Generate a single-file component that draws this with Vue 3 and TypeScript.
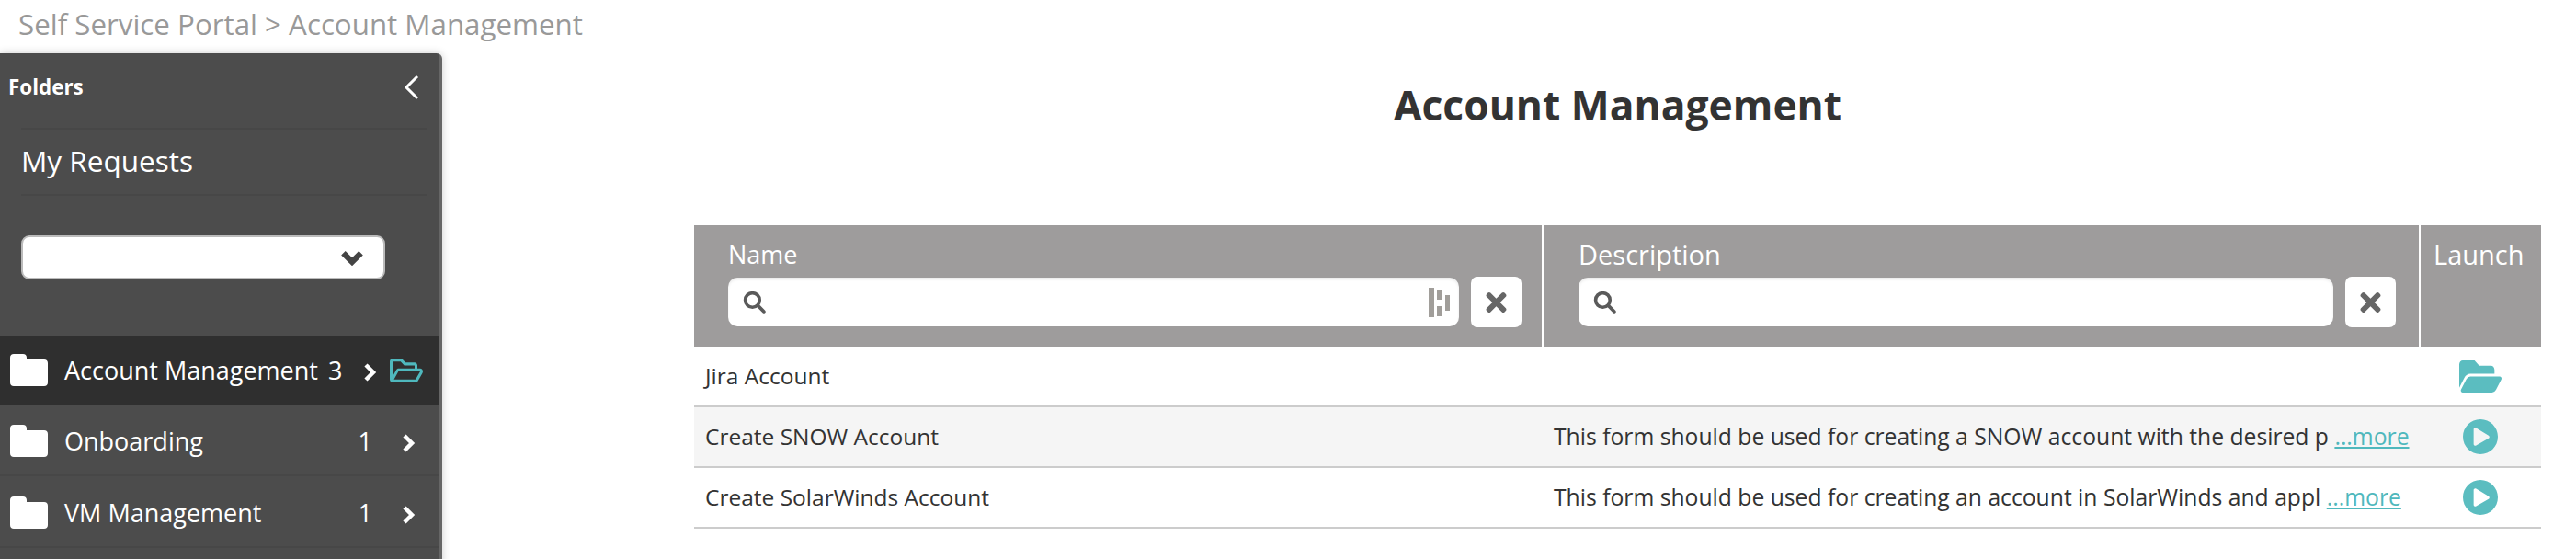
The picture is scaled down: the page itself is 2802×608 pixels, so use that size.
<script setup lang="ts">
interface Folder { name: string; count: number; active?: boolean }
interface Row { name: string; desc: string; kind: 'folder' | 'play' }
const folders: Folder[] = [
  { name: 'Account Management', count: 3, active: true },
  { name: 'Onboarding', count: 1 },
  { name: 'VM Management', count: 1 },
]
const rows: Row[] = [
  { name: 'Jira Account', desc: '', kind: 'folder' },
  { name: 'Create SNOW Account', desc: 'This form should be used for creating a SNOW account with the desired p', kind: 'play' },
  { name: 'Create SolarWinds Account', desc: 'This form should be used for creating an account in SolarWinds and appl', kind: 'play' },
]
</script>

<template>
  <div class="page">
    <div class="crumb">Self Service Portal &gt; Account Management</div>
    <div class="body">
      <aside class="side">
        <div class="side-head">
          <span class="side-title">Folders</span>
          <svg class="collapse" viewBox="0 0 18 28"><polyline points="15,2 3,14 15,26" /></svg>
        </div>
        <div class="req">My Requests</div>
        <div class="select-wrap">
          <div class="select">
            <svg class="sel-chev" viewBox="0 0 24 16"><polyline points="3,3 12,12 21,3" /></svg>
          </div>
        </div>
        <div v-for="f in folders" :key="f.name" class="folder" :class="{ active: f.active }">
          <svg class="f-icon" viewBox="0 0 41 35" preserveAspectRatio="none">
            <path d="M4 0h10c2.500 0 4 1.500 4 4v2h19c2.500 0 4 1.500 4 4v21c0 2.500-1.500 4-4 4H4c-2.500 0-4-1.500-4-4V4c0-2.500 1.500-4 4-4z" />
          </svg>
          <span class="f-name">{{ f.name }}</span>
          <span class="f-count">{{ f.count }}</span>
          <svg class="f-chev" viewBox="0 0 15 22"><polyline points="3,3 11,11 3,19" /></svg>
          <svg v-if="f.active" class="f-open" viewBox="0 64 576 384" preserveAspectRatio="none">
            <path d="M527.900 224H480v-48c0-26.500-21.500-48-48-48H272l-64-64H48C21.500 64 0 85.500 0 112v288c0 26.500 21.500 48 48 48h400c16.500 0 31.900-8.500 40.700-22.600l79.900-128c20-31.900-3-73.400-40.700-73.400zM48 118c0-3.300 2.700-6 6-6h134.100l64 64H426c3.300 0 6 2.700 6 6v42H152c-16.800 0-32.400 8.800-41.100 23.200L48 351.400zm400 282H72l77.200-128H528z" />
          </svg>
        </div>
      </aside>

      <main class="main">
        <h1 class="title">Account Management</h1>
        <div class="table">
          <div class="head">
            <div class="hcell">
              <div class="hlabel name-label">Name</div>
              <div class="filter">
                <div class="input">
                  <svg class="search" viewBox="0 0 24 24"><circle cx="10" cy="10" r="7.500" /><line x1="15.500" y1="15.500" x2="22" y2="22" /></svg>
                  <svg class="dash" viewBox="0 0 24 32">
                    <rect x="0" y="0" width="6" height="32" />
                    <rect x="9" y="2" width="6" height="11" />
                    <rect x="9" y="20" width="6" height="11" />
                    <rect x="18" y="8" width="5" height="17" />
                  </svg>
                </div>
                <button class="clear" type="button" aria-label="Clear">
                  <svg viewBox="0 0 352 512"><path d="M242.720 256l100.070-100.070c12.280-12.280 12.280-32.190 0-44.480l-22.240-22.240c-12.280-12.280-32.190-12.280-44.480 0L176 189.280 75.930 89.210c-12.280-12.280-32.190-12.280-44.480 0L9.210 111.450c-12.280 12.280-12.280 32.190 0 44.480L109.280 256 9.210 356.070c-12.280 12.280-12.280 32.190 0 44.480l22.240 22.240c12.280 12.280 32.200 12.280 44.480 0L176 322.720l100.070 100.070c12.280 12.280 32.200 12.280 44.480 0l22.240-22.240c12.280-12.280 12.280-32.190 0-44.480L242.720 256z" /></svg>
                </button>
              </div>
            </div>
            <div class="hcell">
              <div class="hlabel">Description</div>
              <div class="filter">
                <div class="input">
                  <svg class="search" viewBox="0 0 24 24"><circle cx="10" cy="10" r="7.500" /><line x1="15.500" y1="15.500" x2="22" y2="22" /></svg>
                </div>
                <button class="clear" type="button" aria-label="Clear">
                  <svg viewBox="0 0 352 512"><path d="M242.720 256l100.070-100.070c12.280-12.280 12.280-32.190 0-44.480l-22.240-22.240c-12.280-12.280-32.190-12.280-44.480 0L176 189.280 75.930 89.210c-12.280-12.280-32.190-12.280-44.480 0L9.210 111.450c-12.280 12.280-12.280 32.190 0 44.480L109.280 256 9.210 356.070c-12.280 12.280-12.280 32.190 0 44.480l22.240 22.240c12.280 12.280 32.200 12.280 44.480 0L176 322.720l100.070 100.070c12.280 12.280 32.200 12.280 44.480 0l22.240-22.240c12.280-12.280 12.280-32.190 0-44.480L242.720 256z" /></svg>
                </button>
              </div>
            </div>
            <div class="hcell launch-h"><div class="hlabel">Launch</div></div>
          </div>
          <div v-for="r in rows" :key="r.name" class="row">
            <div class="cell name-cell">{{ r.name }}</div>
            <div class="cell desc-cell">
              <template v-if="r.desc">{{ r.desc }} <a class="more">...more</a></template>
            </div>
            <div class="cell launch">
              <svg v-if="r.kind === 'folder'" class="l-folder" viewBox="0 64 576 384" preserveAspectRatio="none">
                <path d="M572.694 292.093L500.270 416.248A63.997 63.997 0 0 1 444.989 448H45.025c-18.523 0-30.064-20.093-20.731-36.093l72.424-124.155A64 64 0 0 1 152 256h399.964c18.523 0 30.064 20.093 20.730 36.093zM152 224h328v-48c0-26.510-21.490-48-48-48H272l-64-64H48C21.490 64 0 85.490 0 112v278.046l69.077-118.418C86.214 242.250 117.989 224 152 224z" />
              </svg>
              <svg v-else class="l-play" viewBox="8 8 496 496">
                <path d="M256 8C119 8 8 119 8 256s111 248 248 248 248-111 248-248S393 8 256 8zm115.700 272l-176 101c-15.800 8.800-35.700-2.500-35.700-20V152c0-17.400 19.800-28.800 35.700-20l176 107c16.400 9.200 16.400 32.900 0 41z" />
              </svg>
            </div>
          </div>
        </div>
      </main>
    </div>
  </div>
</template>

<style>
html, body { margin: 0; overflow: hidden; background: #fff; }
</style>

<style scoped>
.page {
  width: 2802px;
  height: 608px;
  overflow: hidden;
  font-family: "Open Sans", "Liberation Sans", sans-serif;
  color: #333;
}
.crumb {
  height: 58px;
  box-sizing: border-box;
  padding: 5px 0 0 20px;
  font-size: 31.300px;
  line-height: 42px;
  color: #999;
}
.body { display: flex; height: 550px; }
.side {
  width: 481px;
  height: 560px;
  flex: none;
  box-sizing: border-box;
  background: #4c4c4c;
  border-right: 3px solid #666;
  border-top-right-radius: 6px;
  box-shadow: 0 0 10px rgba(0, 0, 0, 0.2);
  color: #fff;
}
.side-head {
  height: 81px;
  box-sizing: border-box;
  display: flex;
  align-items: center;
  justify-content: space-between;
  padding: 0 21px 8px 9px;
}
.side-title { font-size: 22.400px; font-weight: 700; }
.collapse { width: 18px; height: 28px; }
.collapse polyline { fill: none; stroke: #fff; stroke-width: 3; }
.req {
  margin: 0 13px 0 23px;
  height: 74px;
  box-sizing: border-box;
  border-top: 2px solid #474747;
  border-bottom: 2px solid #474747;
  font-size: 31.500px;
  line-height: 68px;
}
.select-wrap { padding: 43px 0 0 23px; height: 152px; box-sizing: border-box; }
.select {
  width: 396px;
  height: 48px;
  box-sizing: border-box;
  background: #fff;
  border: 2px solid #bbb;
  border-radius: 9px;
  display: flex;
  align-items: center;
  justify-content: flex-end;
  padding-right: 21px;
}
.sel-chev { width: 26px; height: 17px; }
.sel-chev polyline { fill: none; stroke: #444; stroke-width: 6; }
.folder {
  width: 478px;
  height: 78px;
  box-sizing: border-box;
  display: flex;
  align-items: center;
  padding: 2px 26px 0 11px;
  border-bottom: 2px solid #474747;
  font-size: 27px;
}
.folder.active {
  height: 75px;
  background: #2f2f2f;
  border-bottom: 0;
  padding: 0 18px 0 11px;
}
.f-icon { width: 41px; height: 35px; flex: none; }
.f-icon path { fill: #fff; }
.f-name { margin-left: 18px; white-space: nowrap; }
.f-count { margin-left: auto; }
.f-chev { width: 15px; height: 22px; margin-left: 32px; margin-top: 5px; flex: none; }
.f-chev polyline { fill: none; stroke: #fff; stroke-width: 4.500; }
.active .f-count { margin-left: 11px; }
.active .f-chev { margin-left: 23px; }
.f-open { width: 36px; height: 26px; margin-left: 14px; flex: none; }
.f-open path { fill: #4fb8bd; }
.main { flex: 1; padding-left: 274px; padding-right: 38px; min-width: 0; }
.title {
  margin: 0;
  height: 187px;
  box-sizing: border-box;
  padding-top: 26px;
  text-align: center;
  font-size: 44.400px;
  line-height: 60px;
  font-weight: 700;
}
.table { width: 2009px; }
.head, .row {
  display: grid;
  grid-template-columns: 924px 954px 131px;
}
.head { height: 132px; background: #9e9c9c; color: #fff; }
.hcell {
  box-sizing: border-box;
  padding: 12px 22px 0 37px;
  border-right: 2px solid #fff;
}
.hcell:nth-child(2) { padding-left: 38px; padding-right: 25px; }
.launch-h { border-right: 0; padding: 12px 0 0 14px; }
.hlabel { font-size: 29px; line-height: 39px; height: 44px; white-space: nowrap; }
.name-label { font-size: 27px; }
.filter { display: flex; align-items: center; gap: 13px; }
.input {
  flex: 1;
  height: 53px;
  background: #fff;
  border-radius: 10px;
  display: flex;
  align-items: center;
  justify-content: space-between;
  padding: 0 9px 0 16px;
  box-shadow: inset 0 2px 3px rgba(0, 0, 0, 0.08);
}
.search { width: 25px; height: 25px; }
.search circle, .search line { fill: none; stroke: #5a5a5a; stroke-width: 3.500; stroke-linecap: round; }
.dash { width: 24px; height: 32px; fill: #a19e9a; }
.clear {
  width: 55px;
  height: 55px;
  flex: none;
  padding: 0;
  border: 0;
  border-radius: 7px;
  background: #fff;
  display: flex;
  align-items: center;
  justify-content: center;
}
.clear svg { width: 23px; height: 32px; fill: #666; }
.row {
  height: 66px;
  box-sizing: border-box;
  border-bottom: 2px solid #ccc;
  font-size: 24.500px;
  align-items: center;
}
.row:nth-child(3) { background: #f5f5f5; }
.cell { padding-left: 12px; white-space: nowrap; overflow: hidden; }
.name-cell, .desc-cell { padding-bottom: 2px; }
.desc-cell { padding-left: 11px; font-size: 24.700px; }
.cell.launch { padding: 0 2px 0 0; display: flex; justify-content: center; overflow: visible; }
.more { color: #4fb8bd; text-decoration: underline; }
.l-folder { width: 46px; height: 35px; fill: #5bbdc0; }
.l-play { width: 38px; height: 38px; fill: #5bbdc0; }
</style>
